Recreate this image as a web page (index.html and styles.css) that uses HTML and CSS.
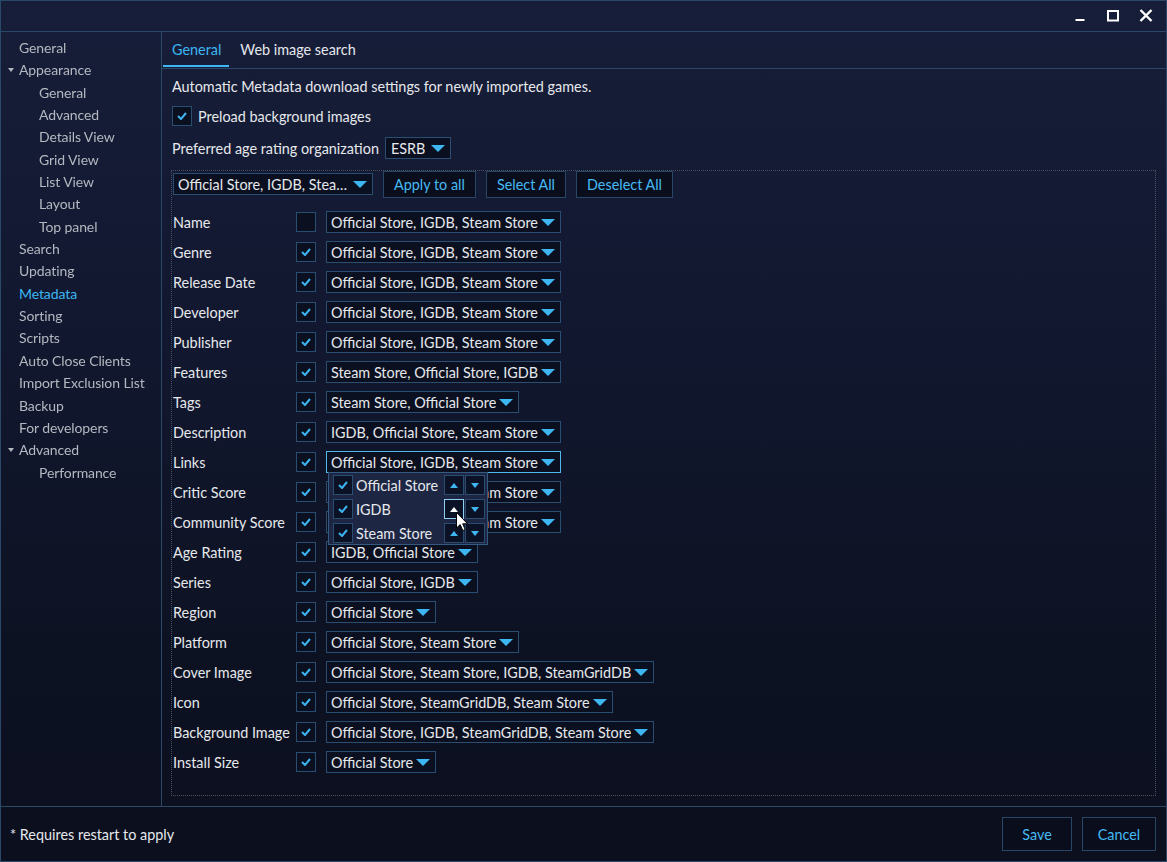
FILE: index.html
```html
<!DOCTYPE html>
<html>
<head>
<meta charset="utf-8">
<link rel="stylesheet" href="styles.css">
</head>
<body>
<div class="window">
  <div class="titlebar">
    <span class="wbtn"><svg width="14" height="14" viewBox="0 0 14 14"><rect x="2.5" y="10" width="9" height="2" fill="#fff"/></svg></span>
    <span class="wbtn"><svg width="14" height="14" viewBox="0 0 14 14"><rect x="2" y="2" width="10" height="9.5" fill="none" stroke="#fff" stroke-width="2"/></svg></span>
    <span class="wbtn"><svg width="14" height="14" viewBox="0 0 14 14"><path d="M1.5 1 L12.5 12 M12.5 1 L1.5 12" stroke="#fff" stroke-width="2.4" fill="none"/></svg></span>
  </div>
  <div class="main">
    <nav class="sidebar">
      <div class="nav l1">General</div>
      <div class="nav l1 exp"><span class="tri"></span>Appearance</div>
      <div class="nav l2">General</div>
      <div class="nav l2">Advanced</div>
      <div class="nav l2">Details View</div>
      <div class="nav l2">Grid View</div>
      <div class="nav l2">List View</div>
      <div class="nav l2">Layout</div>
      <div class="nav l2">Top panel</div>
      <div class="nav l1">Search</div>
      <div class="nav l1">Updating</div>
      <div class="nav l1 sel">Metadata</div>
      <div class="nav l1">Sorting</div>
      <div class="nav l1">Scripts</div>
      <div class="nav l1">Auto Close Clients</div>
      <div class="nav l1">Import Exclusion List</div>
      <div class="nav l1">Backup</div>
      <div class="nav l1">For developers</div>
      <div class="nav l1 exp"><span class="tri"></span>Advanced</div>
      <div class="nav l2">Performance</div>
    </nav>
    <section class="content">
      <div class="tabs">
        <div class="tab active">General</div>
        <div class="tab">Web image search</div>
      </div>
      <div class="body">
        <div class="desc">Automatic Metadata download settings for newly imported games.</div>
        <div class="line preload">
          <span class="cb on"><svg width="10" height="8" viewBox="0 0 10 8"><path d="M1 4 L4 7 L9 1" stroke="#3cb4f0" stroke-width="2" fill="none"/></svg></span>
          <span>Preload background images</span>
        </div>
        <div class="line age">
          <span>Preferred age rating organization</span>
          <span class="combo esrb"><span class="ct">ESRB</span><span class="arr"></span></span>
        </div>
        <div class="frame">
          <div class="toolbar">
            <span class="combo fixed"><span class="ct">Official Store, IGDB, Steam Store</span><span class="arr"></span></span>
            <button class="btn">Apply to all</button>
            <button class="btn">Select All</button>
            <button class="btn">Deselect All</button>
          </div>
          <div class="rows">
            <div class="row"><span class="lbl">Name</span><span class="cb"></span><span class="combo"><span class="ct">Official Store, IGDB, Steam Store</span><span class="arr"></span></span></div>
            <div class="row"><span class="lbl">Genre</span><span class="cb on"><svg width="10" height="8" viewBox="0 0 10 8"><path d="M1 4 L4 7 L9 1" stroke="#3cb4f0" stroke-width="2" fill="none"/></svg></span><span class="combo"><span class="ct">Official Store, IGDB, Steam Store</span><span class="arr"></span></span></div>
            <div class="row"><span class="lbl">Release Date</span><span class="cb on"><svg width="10" height="8" viewBox="0 0 10 8"><path d="M1 4 L4 7 L9 1" stroke="#3cb4f0" stroke-width="2" fill="none"/></svg></span><span class="combo"><span class="ct">Official Store, IGDB, Steam Store</span><span class="arr"></span></span></div>
            <div class="row"><span class="lbl">Developer</span><span class="cb on"><svg width="10" height="8" viewBox="0 0 10 8"><path d="M1 4 L4 7 L9 1" stroke="#3cb4f0" stroke-width="2" fill="none"/></svg></span><span class="combo"><span class="ct">Official Store, IGDB, Steam Store</span><span class="arr"></span></span></div>
            <div class="row"><span class="lbl">Publisher</span><span class="cb on"><svg width="10" height="8" viewBox="0 0 10 8"><path d="M1 4 L4 7 L9 1" stroke="#3cb4f0" stroke-width="2" fill="none"/></svg></span><span class="combo"><span class="ct">Official Store, IGDB, Steam Store</span><span class="arr"></span></span></div>
            <div class="row"><span class="lbl">Features</span><span class="cb on"><svg width="10" height="8" viewBox="0 0 10 8"><path d="M1 4 L4 7 L9 1" stroke="#3cb4f0" stroke-width="2" fill="none"/></svg></span><span class="combo"><span class="ct">Steam Store, Official Store, IGDB</span><span class="arr"></span></span></div>
            <div class="row"><span class="lbl">Tags</span><span class="cb on"><svg width="10" height="8" viewBox="0 0 10 8"><path d="M1 4 L4 7 L9 1" stroke="#3cb4f0" stroke-width="2" fill="none"/></svg></span><span class="combo"><span class="ct">Steam Store, Official Store</span><span class="arr"></span></span></div>
            <div class="row"><span class="lbl">Description</span><span class="cb on"><svg width="10" height="8" viewBox="0 0 10 8"><path d="M1 4 L4 7 L9 1" stroke="#3cb4f0" stroke-width="2" fill="none"/></svg></span><span class="combo"><span class="ct">IGDB, Official Store, Steam Store</span><span class="arr"></span></span></div>
            <div class="row"><span class="lbl">Links</span><span class="cb on"><svg width="10" height="8" viewBox="0 0 10 8"><path d="M1 4 L4 7 L9 1" stroke="#3cb4f0" stroke-width="2" fill="none"/></svg></span>
              <span class="combo focus"><span class="ct">Official Store, IGDB, Steam Store</span><span class="arr"></span>
                <span class="popup">
                  <span class="pitem"><span class="pcb"><svg width="10" height="8" viewBox="0 0 10 8"><path d="M1 4 L4 7 L9 1" stroke="#3cb4f0" stroke-width="2" fill="none"/></svg></span><span class="pt">Official Store</span><span class="sb"><span class="up"></span></span><span class="sb"><span class="dn"></span></span></span>
                  <span class="pitem"><span class="pcb"><svg width="10" height="8" viewBox="0 0 10 8"><path d="M1 4 L4 7 L9 1" stroke="#3cb4f0" stroke-width="2" fill="none"/></svg></span><span class="pt">IGDB</span><span class="sb hot"><span class="up"></span></span><span class="sb"><span class="dn"></span></span></span>
                  <span class="pitem"><span class="pcb"><svg width="10" height="8" viewBox="0 0 10 8"><path d="M1 4 L4 7 L9 1" stroke="#3cb4f0" stroke-width="2" fill="none"/></svg></span><span class="pt">Steam Store</span><span class="sb"><span class="up"></span></span><span class="sb"><span class="dn"></span></span></span>
                  <svg class="cursor" width="13" height="20" viewBox="0 0 13 20"><path d="M0.5 0.5 L0.5 16 L4.2 12.6 L6.8 18.6 L9.2 17.6 L6.7 11.8 L11.6 11.8 Z" fill="#fff" stroke="#000" stroke-width="1"/></svg>
                </span>
              </span>
            </div>
            <div class="row"><span class="lbl">Critic Score</span><span class="cb on"><svg width="10" height="8" viewBox="0 0 10 8"><path d="M1 4 L4 7 L9 1" stroke="#3cb4f0" stroke-width="2" fill="none"/></svg></span><span class="combo"><span class="ct">Official Store, IGDB, Steam Store</span><span class="arr"></span></span></div>
            <div class="row"><span class="lbl">Community Score</span><span class="cb on"><svg width="10" height="8" viewBox="0 0 10 8"><path d="M1 4 L4 7 L9 1" stroke="#3cb4f0" stroke-width="2" fill="none"/></svg></span><span class="combo"><span class="ct">Official Store, IGDB, Steam Store</span><span class="arr"></span></span></div>
            <div class="row"><span class="lbl">Age Rating</span><span class="cb on"><svg width="10" height="8" viewBox="0 0 10 8"><path d="M1 4 L4 7 L9 1" stroke="#3cb4f0" stroke-width="2" fill="none"/></svg></span><span class="combo"><span class="ct">IGDB, Official Store</span><span class="arr"></span></span></div>
            <div class="row"><span class="lbl">Series</span><span class="cb on"><svg width="10" height="8" viewBox="0 0 10 8"><path d="M1 4 L4 7 L9 1" stroke="#3cb4f0" stroke-width="2" fill="none"/></svg></span><span class="combo"><span class="ct">Official Store, IGDB</span><span class="arr"></span></span></div>
            <div class="row"><span class="lbl">Region</span><span class="cb on"><svg width="10" height="8" viewBox="0 0 10 8"><path d="M1 4 L4 7 L9 1" stroke="#3cb4f0" stroke-width="2" fill="none"/></svg></span><span class="combo"><span class="ct">Official Store</span><span class="arr"></span></span></div>
            <div class="row"><span class="lbl">Platform</span><span class="cb on"><svg width="10" height="8" viewBox="0 0 10 8"><path d="M1 4 L4 7 L9 1" stroke="#3cb4f0" stroke-width="2" fill="none"/></svg></span><span class="combo"><span class="ct">Official Store, Steam Store</span><span class="arr"></span></span></div>
            <div class="row"><span class="lbl">Cover Image</span><span class="cb on"><svg width="10" height="8" viewBox="0 0 10 8"><path d="M1 4 L4 7 L9 1" stroke="#3cb4f0" stroke-width="2" fill="none"/></svg></span><span class="combo"><span class="ct">Official Store, Steam Store, IGDB, SteamGridDB</span><span class="arr"></span></span></div>
            <div class="row"><span class="lbl">Icon</span><span class="cb on"><svg width="10" height="8" viewBox="0 0 10 8"><path d="M1 4 L4 7 L9 1" stroke="#3cb4f0" stroke-width="2" fill="none"/></svg></span><span class="combo"><span class="ct">Official Store, SteamGridDB, Steam Store</span><span class="arr"></span></span></div>
            <div class="row"><span class="lbl">Background Image</span><span class="cb on"><svg width="10" height="8" viewBox="0 0 10 8"><path d="M1 4 L4 7 L9 1" stroke="#3cb4f0" stroke-width="2" fill="none"/></svg></span><span class="combo"><span class="ct">Official Store, IGDB, SteamGridDB, Steam Store</span><span class="arr"></span></span></div>
            <div class="row"><span class="lbl">Install Size</span><span class="cb on"><svg width="10" height="8" viewBox="0 0 10 8"><path d="M1 4 L4 7 L9 1" stroke="#3cb4f0" stroke-width="2" fill="none"/></svg></span><span class="combo"><span class="ct">Official Store</span><span class="arr"></span></span></div>
          </div>
        </div>
      </div>
    </section>
  </div>
  <div class="footer">
    <span class="note">* Requires restart to apply</span>
    <span class="fbtns">
      <button class="btn big save">Save</button>
      <button class="btn big cancel">Cancel</button>
    </span>
  </div>
</div>
</body>
</html>
```

FILE: styles.css
```css
* { box-sizing: border-box; }
html, body { margin: 0; padding: 0; }
body {
  background: #0d1222;
  font-family: Lato, "Liberation Sans", sans-serif;
  font-size: 14.4px;
  color: #e6e8ec;
  overflow: hidden;
}
.window {
  width: 1167px;
  height: 862px;
  border: 1px solid #2a4868;
  display: flex;
  flex-direction: column;
  background: linear-gradient(180deg, #171e39 0%, #121830 35%, #0d1223 75%, #0b0f1e 100%);
}
.titlebar {
  height: 31px;
  flex: none;
  border-bottom: 1px solid #2a4868;
  display: flex;
  justify-content: flex-end;
  align-items: center;
  padding-right: 4px;
}
.wbtn {
  width: 33px;
  height: 30px;
  display: flex;
  align-items: center;
  justify-content: center;
}
.main {
  flex: 1;
  display: flex;
  min-height: 0;
}
.sidebar {
  width: 161px;
  flex: none;
  border-right: 1px solid #2a4868;
  padding-top: 5px;
}
.nav {
  height: 22.35px;
  line-height: 22px;
  font-size: 14px;
  color: #b4b8c0;
  filter: blur(0.6px);
  white-space: nowrap;
  position: relative;
  letter-spacing: -0.1px;
}
.nav.l1 { padding-left: 18px; }
.nav.l2 { padding-left: 38px; }
.nav.sel { color: #3db6f2; filter: none; }
.tri {
  position: absolute;
  left: 7px;
  top: 9px;
  width: 0;
  height: 0;
  border-left: 3.5px solid transparent;
  border-right: 3.5px solid transparent;
  border-top: 4px solid #b4b8c0;
}
.content {
  flex: 1;
  display: flex;
  flex-direction: column;
  min-width: 0;
}
.tabs {
  height: 37px;
  flex: none;
  border-bottom: 1px solid #2a4868;
  display: flex;
  padding-left: 1px;
  gap: 2px;
}
.tab {
  padding: 0 9px;
  line-height: 36px;
  color: #e6e8ec;
  border-bottom: 2px solid transparent;
  height: 36px;
  margin-bottom: -1px;
}
.tab.active {
  color: #3db6f2;
  border-bottom: 2px solid #3db6f2;
  height: 35px;
  padding: 0 8px 0 9px;
}
.body {
  flex: 1;
  display: flex;
  flex-direction: column;
  padding: 8px 10px 10px 10px;
  min-height: 0;
}
.desc { line-height: 20px; height: 20px; }
.line { display: flex; align-items: center; }
.preload { margin-top: 9px; height: 20px; gap: 6px; }
.age { margin-top: 11px; height: 22px; gap: 6px; }
.combo.esrb { padding-left: 5px; padding-right: 5px; }
.combo.esrb .arr { margin-left: 6px; }
.cb, .pcb {
  width: 20px;
  height: 20px;
  flex: none;
  border: 1px solid #2a4d72;
  background: #0b1020;
  display: inline-flex;
  align-items: center;
  justify-content: center;
}
.combo {
  position: relative;
  height: 22px;
  border: 1px solid #2a4d72;
  background: #0b1020;
  display: inline-flex;
  align-items: center;
  padding: 0 5px 0 4px;
  white-space: nowrap;
  color: #e6e8ec;
}
.combo.focus { border-color: #52b7ea; }
.ct { overflow: hidden; text-overflow: ellipsis; }
.arr {
  flex: none;
  width: 0;
  height: 0;
  margin-left: 3px;
  border-left: 7px solid transparent;
  border-right: 7px solid transparent;
  border-top: 7px solid #3db6f2;
}
.frame {
  margin-top: 11px;
  flex: 1;
  border: 1px dotted #4a505c;
  margin-left: -1px;
}
.toolbar {
  display: flex;
  align-items: center;
  height: 26px;
  gap: 10px;
}
.combo.fixed { width: 200px; justify-content: space-between; margin-left: 1px; }
.combo.fixed .arr { margin-left: 6px; }
.btn {
  font-family: inherit;
  font-size: 14.4px;
  color: #45b9f2;
  background: #0a0e1c;
  border: 1px solid #284666;
  height: 27px;
  padding: 0 10px;
  cursor: pointer;
}
.rows { margin-top: 10px; }
.row {
  display: flex;
  align-items: center;
  height: 30px;
  position: relative;
}
.lbl { width: 124px; flex: none; padding-left: 1px; }
.row .cb { margin-right: 10px; }
.popup {
  position: absolute;
  left: 1px;
  top: 20px;
  width: 160px;
  height: 73px;
  background: #1d2744;
  border: 1px solid #355a82;
  z-index: 5;
  padding: 2px 0 0 4px;
  display: flex;
  flex-direction: column;
  gap: 4px;
}
.pitem {
  display: flex;
  align-items: center;
  height: 20px;
}
.pitem .pcb { background: #0c1226; }
.pt { width: 88px; margin-left: 3px; overflow: hidden; }
.sb {
  width: 20px;
  height: 20px;
  flex: none;
  border: 1px solid #2c4d72;
  background: #0c1226;
  display: inline-flex;
  align-items: center;
  justify-content: center;
  margin-right: 1px;
}
.sb.hot { border-color: #8fd0f2; }
.up {
  width: 0; height: 0;
  border-left: 4.5px solid transparent;
  border-right: 4.5px solid transparent;
  border-bottom: 5px solid #3db6f2;
}
.sb.hot .up { border-bottom-color: #ffffff; }
.dn {
  width: 0; height: 0;
  border-left: 4.5px solid transparent;
  border-right: 4.5px solid transparent;
  border-top: 5px solid #3db6f2;
}
.cursor {
  position: absolute;
  left: 127px;
  top: 39px;
}
.footer {
  height: 55px;
  flex: none;
  border-top: 1px solid #2a4868;
  display: flex;
  align-items: center;
  justify-content: space-between;
  padding: 0 10px 0 9px;
  background: #0b0f1e;
}
.note { font-size: 14.4px; }
.fbtns { display: flex; gap: 10px; }
.btn.big { height: 34px; }
.btn.save { width: 70px; }
.btn.cancel { width: 74px; }
```
